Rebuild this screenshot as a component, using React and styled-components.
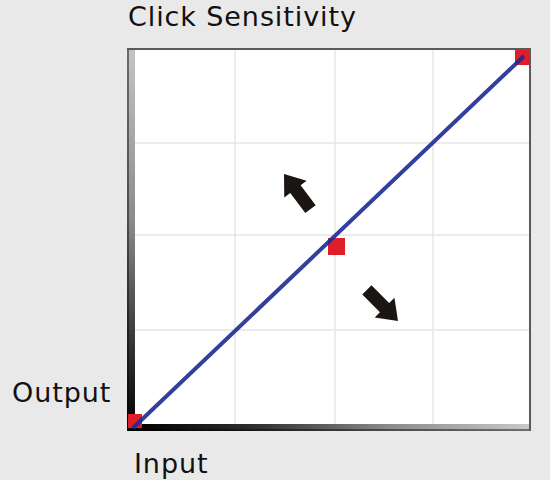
import React from 'react'
import styled, { createGlobalStyle } from 'styled-components'

const GlobalStyle = createGlobalStyle`
  body {
    margin: 0;
    background: #e9e9e9;
    font-family: "DejaVu Sans", Verdana, sans-serif;
    color: #111;
  }
`

const Page = styled.div`
  display: grid;
  grid-template-columns: 127px 404px;
  grid-template-rows: auto 383px auto;
  width: 550px;
  height: 480px;
`

const Label = styled.div`
  font-size: 27px;
  line-height: 27px;
  letter-spacing: 0.9px;
  white-space: nowrap;
`

const Title = styled(Label)`
  grid-column: 2;
  grid-row: 1;
  padding: 3px 0 0 1px;
  margin-bottom: 15px;
`

const YLabel = styled(Label)`
  grid-column: 1;
  grid-row: 2;
  align-self: end;
  padding-left: 12px;
  margin-bottom: 25px;
`

const XLabel = styled(Label)`
  grid-column: 2;
  grid-row: 3;
  margin-top: 19px;
  padding-left: 7px;
`

const ChartBox = styled.div`
  grid-column: 2;
  grid-row: 2;
  position: relative;
`

const Frame = styled.div`
  box-sizing: border-box;
  width: 100%;
  height: 100%;
  display: grid;
  grid-template-columns: 8px 1fr;
  grid-template-rows: 1fr 7px;
  border-top: 2px solid #5a5a5a;
  border-right: 2px solid #5a5a5a;
`

const OutputAxis = styled.div`
  grid-column: 1;
  grid-row: 1 / 3;
  background: linear-gradient(to top, #000 0%, #3a3a3a 25%, #8a8a8a 55%, #c4c4c4 100%);
  box-shadow: inset 2px 0 0 rgba(0, 0, 0, 0.45);
`

const InputAxis = styled.div`
  grid-column: 2;
  grid-row: 2;
  background: linear-gradient(to right, #000 0%, #2e2e2e 30%, #8c8c8c 65%, #c8c8c8 100%);
  box-shadow: inset 0 -2px 0 rgba(0, 0, 0, 0.45);
`

const Plot = styled.div`
  grid-column: 2;
  grid-row: 1;
  background: #fff;
`

const Overlay = styled.svg`
  position: absolute;
  inset: 0;
  overflow: visible;
`

const ARROW = '0,0 14,19 6.5,19 6.5,44 -6.5,44 -6.5,19 -14,19'

const vLines = [108, 208, 306]
const hLines = [95, 187, 282]

const points = [
  { x: 1, y: 366, s: 14 },
  { x: 201, y: 190, s: 17 },
  { x: 388, y: 2, s: 15 },
]

const App = () => (
  <>
    <GlobalStyle />
    <Page>
      <Title>Click Sensitivity</Title>
      <YLabel>Output</YLabel>
      <ChartBox>
        <Frame>
          <OutputAxis />
          <Plot />
          <InputAxis />
        </Frame>
        <Overlay width="404" height="383" viewBox="0 0 404 383">
          {vLines.map((x) => (
            <line key={x} x1={x} y1="2" x2={x} y2="376" stroke="#e6e6e6" strokeWidth="1.5" />
          ))}
          {hLines.map((y) => (
            <line key={y} x1="8" y1={y} x2="402" y2={y} stroke="#e6e6e6" strokeWidth="1.5" />
          ))}
          {points.map((p) => (
            <rect key={p.x} x={p.x} y={p.y} width={p.s} height={p.s} fill="#e01e2a" />
          ))}
          <line x1="6" y1="380" x2="397" y2="8" stroke="#1c2b92" strokeWidth="4" opacity="0.9" />
          <polygon points={ARROW} fill="#1b1513" transform="translate(157 126) rotate(-37)" />
          <polygon points={ARROW} fill="#1b1513" transform="translate(271 273) rotate(135)" />
        </Overlay>
      </ChartBox>
      <XLabel>Input</XLabel>
    </Page>
  </>
)

export default App
